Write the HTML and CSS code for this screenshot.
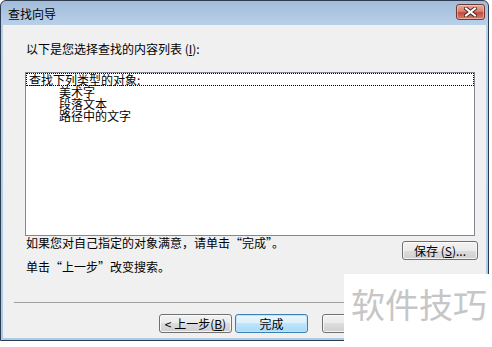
FILE: index.html
```html
<!DOCTYPE html>
<html lang="zh-CN">
<head>
    <meta charset="UTF-8">
    <title>查找向导</title>
    <link rel="stylesheet" href="styles.css">
</head>
<body>

<div class="window">
    <div class="titlebar">
        <span class="title">查找向导</span>
        <button class="close" aria-label="关闭">
            <svg width="13" height="10" viewBox="0 0 13 10">
                <path d="M2 1.5 L11 8.5 M11 1.5 L2 8.5" stroke="#4a2a26" stroke-width="4" stroke-linecap="square"/>
                <path d="M2 1.5 L11 8.5 M11 1.5 L2 8.5" stroke="#ffffff" stroke-width="2" stroke-linecap="square"/>
            </svg>
        </button>
    </div>

    <div class="client">
        <p class="label">以下是您选择查找的内容列表 (<u>I</u>):</p>

        <div class="listbox">
            <div class="item focus">查找下列类型的对象:</div>
            <div class="item sub">美术字</div>
            <div class="item sub">段落文本</div>
            <div class="item sub">路径中的文字</div>
        </div>

        <div class="info">
            <div class="info-text">
                <p>如果您对自己指定的对象满意，请单击“完成”。</p>
                <p>单击“上一步”改变搜索。</p>
            </div>
            <button class="btn save">保存 (<u>S</u>)...</button>
        </div>

        <hr class="sep">

        <div class="actions">
            <button class="btn">&lt; 上一步(<u>B</u>)</button>
            <button class="btn default">完成</button>
            <button class="btn">取消</button>
        </div>
    </div>
</div>

<div class="watermark">软件技巧</div>

</body>
</html>
```

FILE: styles.css
```css
/* Page */
body {
    margin: 0;
    background: #ffffff;
    font-family: "Noto Sans CJK SC", "Liberation Sans", sans-serif;
    font-size: 12px;
    color: #000;
}

/* Window frame */
.window {
    width: 489px;
    height: 341px;
    box-sizing: border-box;
    border: 1px solid #2d3c50;
    border-radius: 6px 6px 0 0;
    padding: 0 2px 2px;
    display: flex;
    flex-direction: column;
    background: linear-gradient(#a2bcd9 0, #b9d0e9 24px, #a9cbe6 100%);
}

.titlebar {
    height: 24px;
    display: flex;
    align-items: center;
    padding: 0 1px 0 5px;
}

.title {
    flex: 1;
    line-height: 12px;
    padding-top: 2px;
}

.close {
    width: 29px;
    height: 16px;
    margin-top: -2px;
    padding: 0;
    border: 1px solid #6b3a33;
    border-radius: 3px;
    background: linear-gradient(#e6aa9e 0%, #d8826f 45%, #c4493a 55%, #d6806e 100%);
    box-shadow: inset 0 0 0 1px rgba(255, 220, 210, 0.5);
    display: flex;
    align-items: center;
    justify-content: center;
}

/* Dialog body */
.client {
    flex: 1;
    background: #f0f0f0;
    padding: 0 11px 0 22px;
}

.label {
    margin: 18px 0 0 1px;
    line-height: 12px;
}

.listbox {
    width: 450px;
    height: 164px;
    box-sizing: border-box;
    margin-top: 17px;
    border: 1px solid #828790;
    background: #ffffff;
}

.item {
    line-height: 12px;
    white-space: nowrap;
}

.item.focus {
    height: 11px;
    border: 1px dotted #000;
    padding-left: 2px;
    line-height: 11px;
}

.item.sub {
    padding-left: 33px;
}

.info {
    display: flex;
    align-items: flex-start;
}

.info-text {
    flex: 1;
    padding: 1px 0 0 1px;
}

.info-text p {
    margin: 0 0 12px;
    line-height: 12px;
}

.info-text p:last-child {
    margin-bottom: 0;
}

/* Buttons */
.btn {
    width: 73px;
    height: 19px;
    padding: 0;
    font-family: inherit;
    font-size: 12px;
    line-height: 12px;
    color: #000;
    border: 1px solid #707070;
    border-radius: 3px;
    background: linear-gradient(#f2f2f2 0%, #ebebeb 50%, #dddddd 50%, #cfcfcf 100%);
    box-shadow: inset 0 0 0 1px rgba(255, 255, 255, 0.75);
}

.btn.save {
    width: 76px;
    margin: 5px -3px 0 0;
}

.btn.default {
    border-color: #3c7fb1;
    background: linear-gradient(#eaf6fd 0%, #d9f0fc 50%, #bee6fd 50%, #a7d9f5 100%);
    box-shadow: inset 0 0 0 1px #c2e4f6;
}

.sep {
    width: 464px;
    height: 1px;
    border: 0;
    margin: 29px 0 0 -11px;
    background: #a0a0a0;
}

.actions {
    display: flex;
    gap: 3px;
    margin-top: 11px;
    padding-left: 134px;
}

.actions .btn:last-child {
    margin-left: 11px;
}

/* Site watermark over the corner */
.watermark {
    position: absolute;
    left: 344px;
    top: 274px;
    right: 0;
    bottom: 0;
    background: #ffffff;
    color: #c6c6c6;
    font-size: 34px;
    line-height: 34px;
    padding: 13px 0 0 7px;
    white-space: nowrap;
}
```
